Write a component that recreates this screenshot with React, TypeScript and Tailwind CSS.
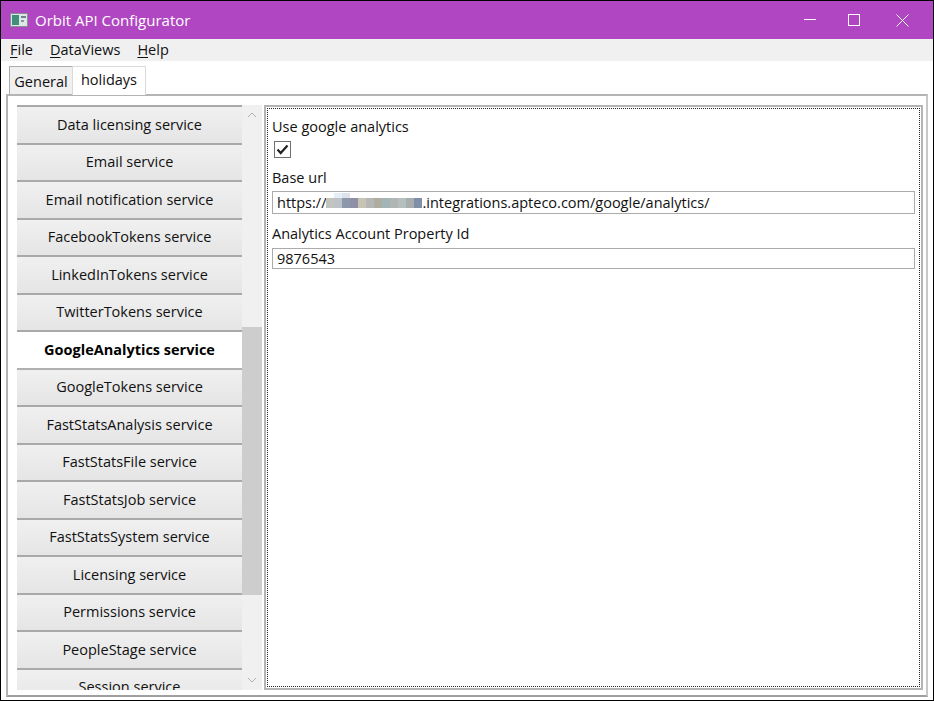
const items = [
  "Data licensing service",
  "Email service",
  "Email notification service",
  "FacebookTokens service",
  "LinkedInTokens service",
  "TwitterTokens service",
  "GoogleAnalytics service",
  "GoogleTokens service",
  "FastStatsAnalysis service",
  "FastStatsFile service",
  "FastStatsJob service",
  "FastStatsSystem service",
  "Licensing service",
  "Permissions service",
  "PeopleStage service",
  "Session service",
];

const mosaic = ["#c4c4bf", "#bcc2c8", "#8e98ac", "#8f8fa6", "#c9c3b6", "#b4b7b6", "#aeada0", "#a4b5b8", "#b1b5b3", "#b5bfbd", "#a9adad", "#7f8fa8"];

function U({ children }: { children: string }) {
  return <span className="underline underline-offset-2">{children}</span>;
}

export default function App() {
  return (
    <div
      className="w-[934px] h-[701px] flex flex-col bg-white border border-black overflow-hidden text-[14.5px] text-[#111]"
      style={{ fontFamily: '"Open Sans", "Noto Sans", sans-serif' }}
    >
      <div className="h-[38px] shrink-0 bg-[#b146c2] flex items-center text-white">
        <svg width="18" height="16" viewBox="0 0 18 16" className="ml-[9px] mr-[7px]">
          <rect x="0.5" y="1.5" width="17" height="13" fill="#dfe6e6" stroke="#8a8f94" />
          <rect x="2" y="3" width="7" height="10" fill="#3f8f7a" />
          <rect x="11" y="4" width="5" height="2" fill="#6f7f8a" />
          <rect x="11" y="8" width="3" height="2" fill="#8a97a0" />
        </svg>
        <span className="text-[15px]">Orbit API Configurator</span>
        <div className="ml-auto flex items-center">
          <svg width="46" height="38" viewBox="0 0 46 38" stroke="white" fill="none">
            <path d="M11 18.5h12" />
          </svg>
          <svg width="46" height="38" viewBox="0 0 46 38" stroke="white" fill="none" className="ml-[-5px]">
            <rect x="14.5" y="13.5" width="11" height="11" />
          </svg>
          <svg width="46" height="38" viewBox="0 0 46 38" stroke="white" fill="none" className="ml-[6px] mr-[1px]">
            <path d="M10.5 13.5l12 12M22.5 13.5l-12 12" />
          </svg>
        </div>
      </div>
      <div className="h-[22px] shrink-0 bg-[#f0f0f0] flex items-center gap-[17px] pl-[9px]">
        <span><U>F</U>ile</span>
        <span><U>D</U>ataViews</span>
        <span><U>H</U>elp</span>
      </div>
      <div className="h-[33px] shrink-0 flex items-end pl-[8px] pt-[5px]">
        <div className="h-[28px] mb-0 w-[64px] flex items-center justify-center border border-b-0 border-[#acacac] bg-[#f0f0f0] pt-[2px]">General</div>
        <div className="h-[29px] w-[74px] flex items-center justify-center border border-b-0 border-[#d9d9d9] bg-white ml-[-1px] relative z-10 translate-y-[1px] pb-[3px]">holidays</div>
      </div>
      <div className="flex-1 min-h-0 mx-[5px] mb-[3px] border-2 border-[#b4b4b4] border-r-[#c8c8c8] border-b-[#a0a0a0] pt-[9px] pb-[5px] pl-[9px] pr-[3px] flex gap-[2px]">
        <div className="w-[245px] flex shrink-0 relative">
          <div className="w-[225px] overflow-hidden border-t-2 border-[#a9a9a9]">
            {items.map((label) => {
              const selected = label === "GoogleAnalytics service";
              return (
                <div
                  key={label}
                  className={
                    selected
                      ? "h-[37.5px] relative -ml-px border border-r-0 border-b-2 border-t-0 border-[#b0b0b0] bg-white font-bold text-black flex items-center justify-center"
                      : "h-[37.5px] border-b-2 border-[#a9a9a9] bg-gradient-to-b from-[#f0f0f0] to-[#e5e5e5] flex items-center justify-center"
                  }
                >
                  {label}
                </div>
              );
            })}
          </div>
          <div className="w-[20px] flex flex-col bg-[#f0f0f0] items-center">
            <div className="h-[20px] w-full flex items-center justify-center">
              <svg width="10" height="6" viewBox="0 0 10 6" fill="none" stroke="#b0b0b0"><path d="M1 5l4-4 4 4" /></svg>
            </div>
            <div className="h-[202px]" />
            <div className="h-[268px] w-full bg-[#cdcdcd]" />
            <div className="flex-1" />
            <div className="h-[20px] w-full flex items-center justify-center">
              <svg width="10" height="6" viewBox="0 0 10 6" fill="none" stroke="#b0b0b0"><path d="M1 1l4 4 4-4" /></svg>
            </div>
          </div>
        </div>
        <div className="flex-1 border-2 border-[#b4b4b4] border-b-[#b4b4b4] p-px">
          <div className="h-full border border-dotted border-[#222] px-[4px] pt-[8px]">
            <div className="h-[20px] flex items-center">Use google analytics</div>
            <div className="h-[17px] w-[17px] mt-[4px] ml-[2px] border border-[#707070] bg-white flex items-center justify-center">
              <svg width="13" height="11" viewBox="0 0 13 11" fill="none" stroke="#222" strokeWidth="2.2"><path d="M1.5 5.5l3.2 3.5L11.5 1.5" /></svg>
            </div>
            <div className="h-[20px] mt-[10px] flex items-center">Base url</div>
            <div className="h-[23px] mt-[3px] border border-[#ababab] px-[4px] flex items-center whitespace-nowrap">
              <span>https://</span>
              <span className="flex h-[10px] mt-[1px] relative">
                <span className="absolute left-[8px] top-[-5px] w-[8px] h-[5px] bg-[#e6eff6]" />
                <span className="absolute left-[16px] top-[-5px] w-[8px] h-[5px] bg-[#dde3ec]" />
                {mosaic.map((color, i) => (
                  <span key={i} className="w-[8px] h-[10px]" style={{ backgroundColor: color }} />
                ))}
              </span>
              <span>.integrations.apteco.com/google/analytics/</span>
            </div>
            <div className="h-[20px] mt-[10px] flex items-center">Analytics Account Property Id</div>
            <div className="h-[21px] mt-[4px] border border-[#ababab] px-[4px] flex items-center">9876543</div>
          </div>
        </div>
      </div>
    </div>
  );
}
